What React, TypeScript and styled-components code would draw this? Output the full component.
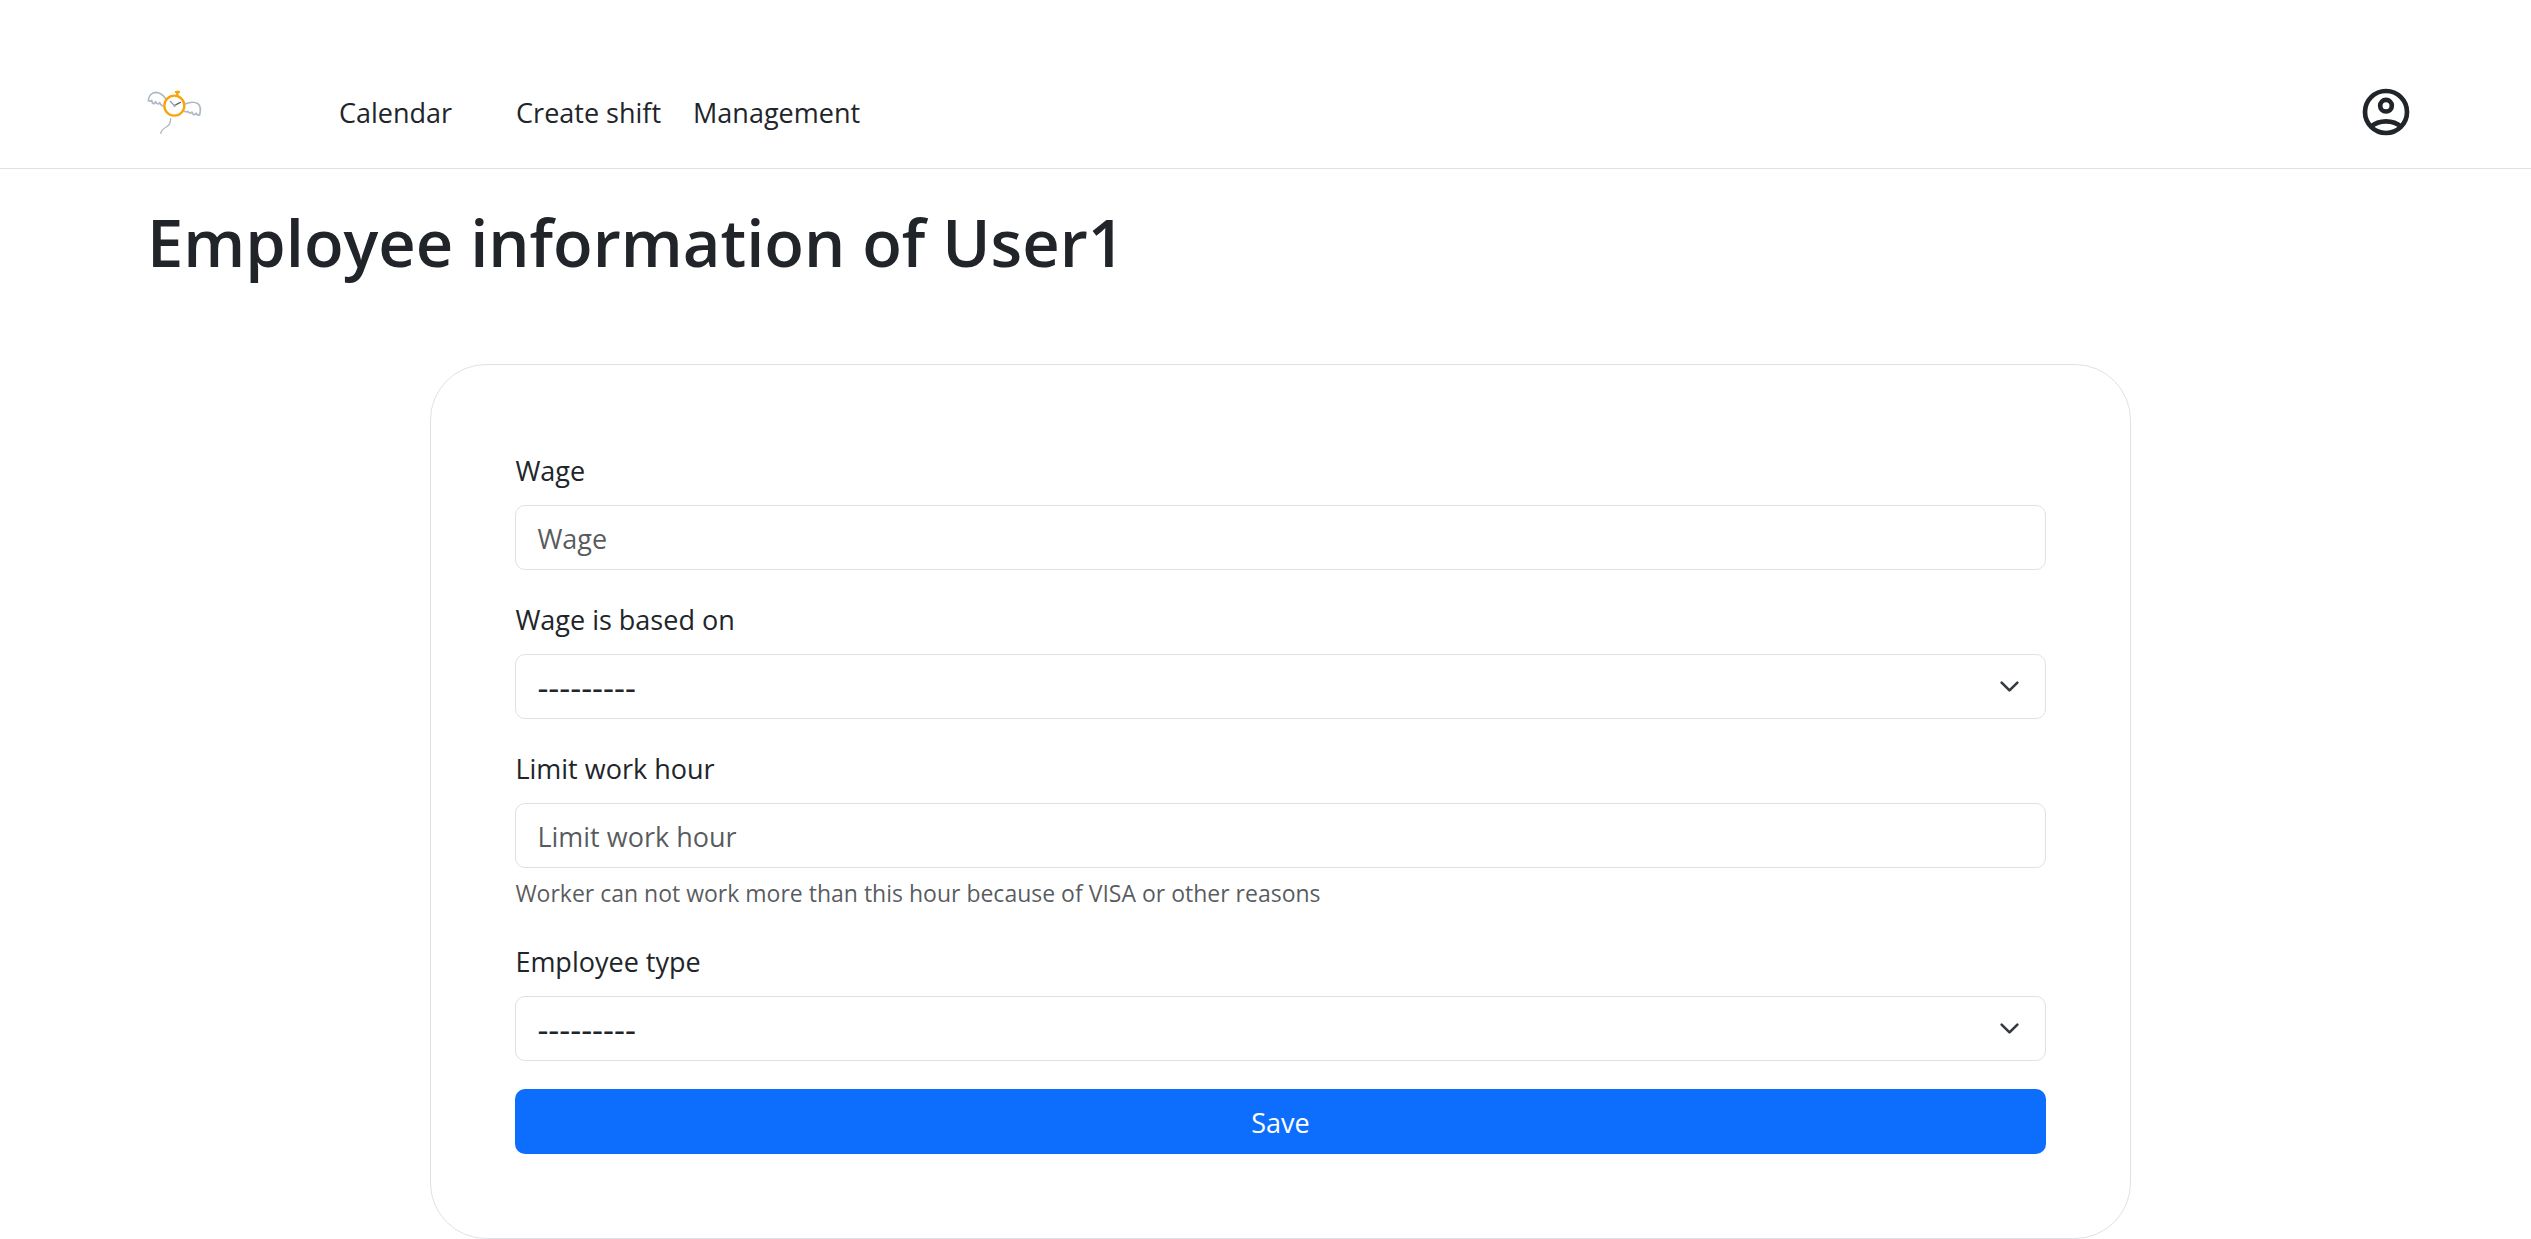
import React from "react";
import styled, { createGlobalStyle } from "styled-components";

const ink = "#212529";
const line = "#dee2e6";

const GlobalStyle = createGlobalStyle`
  *, *::before, *::after { box-sizing: border-box; }
  body {
    margin: 0;
    background: #fff;
    color: ${ink};
    font-family: "Open Sans", "Noto Sans", sans-serif;
    font-size: 27px;
    line-height: 44px;
  }
`;

const Header = styled.header`
  display: flex;
  align-items: center;
  padding: 84px 117px 28px 147px;
  border-bottom: 1px solid ${line};
`;

const LogoLink = styled.a`
  display: flex;
  flex: none;
  width: 192px;
`;

const Nav = styled.nav`
  display: flex;
  flex: 1;
  gap: 32px;
  padding-top: 2px;
`;

const NavLink = styled.a<{ $wide?: boolean }>`
  color: inherit;
  text-decoration: none;
  white-space: nowrap;
  padding-right: ${(p) => (p.$wide ? "32px" : "0")};
`;

const AccountLink = styled.a`
  display: flex;
  color: inherit;
`;

const Main = styled.main`
  padding: 31px 117px 0 147px;
`;

const Title = styled.h1`
  margin: 0 0 80px;
  font-size: 65px;
  font-weight: 600;
  line-height: 84px;
`;

const Card = styled.form`
  display: flex;
  flex-direction: column;
  gap: 28px;
  width: 75%;
  margin: 0 auto;
  padding: 84px;
  border: 1px solid ${line};
  border-radius: 56px;
`;

const Field = styled.div`
  display: flex;
  flex-direction: column;
`;

const Label = styled.label`
  margin-bottom: 12px;
  align-self: flex-start;
`;

const Input = styled.input`
  width: 100%;
  height: 65px;
  padding: 2px 21px 0;
  border: 1px solid ${line};
  border-radius: 10px;
  background: #fff;
  color: ${ink};
  font: inherit;
  &::placeholder {
    color: rgba(33, 37, 41, 0.75);
    opacity: 1;
  }
`;

const SelectWrap = styled.div`
  position: relative;
`;

const Select = styled.select`
  display: block;
  width: 100%;
  height: 65px;
  padding: 0 63px 0 21px;
  appearance: none;
  border: 1px solid ${line};
  border-radius: 10px;
  background: #fff;
  color: ${ink};
  font: inherit;
  font-size: 34px;
`;

const Chevron = styled.svg`
  position: absolute;
  top: 22px;
  right: 26px;
  width: 21px;
  height: 21px;
  pointer-events: none;
`;

const Help = styled.div`
  margin-top: 7px;
  color: rgba(33, 37, 41, 0.75);
  font-size: 23px;
  line-height: 37px;
`;

const SaveButton = styled.button`
  height: 65px;
  padding: 2px 21px 0;
  border: 0;
  border-radius: 10px;
  background: #0d6efd;
  color: #fff;
  font: inherit;
  cursor: pointer;
`;

function Logo() {
  return (
    <svg width="56" height="48" viewBox="54 54 168 144" fill="none" strokeLinecap="round" strokeLinejoin="round" aria-hidden="true">
      <g stroke="#adb8c4" strokeWidth="5">
        <path d="M110 86C102 74 90 67 79 67C67 68 59 79 58 92C62 95 65 94 68 91C69 96 71 102 75 101C78 100 79 97 80 95C82 99 84 103 88 102C91 101 91 99 92 98C94 103 97 107 103 108" />
        <path d="M168 102C180 97 197 95 207 101C215 108 215 123 212 135C207 137 204 134 202 130C199 134 196 135 193 133C190 131 190 128 189 126C186 130 183 130 180 128C178 126 177 125 176 124C173 126 170 126 167 124" />
        <path d="M125 146C124 160 122 165 112 171C102 176 97 181 95 190" strokeWidth="4" />
      </g>
      <circle cx="136" cy="107" r="30" fill="#fff" stroke="#f9a30d" strokeWidth="7" />
      <path d="M145 78V70" stroke="#f9a30d" strokeWidth="7" />
      <path d="M141 66H150" stroke="#f9a30d" strokeWidth="7" />
      <path d="M124 94L136 107" stroke="#8b959f" strokeWidth="4" />
      <path d="M137 106L154 97" stroke="#5c646c" strokeWidth="4" />
      <circle cx="137" cy="107" r="4" fill="#a3afbb" />
    </svg>
  );
}

function AccountIcon() {
  return (
    <svg width="56" height="56" viewBox="0 0 24 24" fill="none" stroke="currentColor" strokeWidth="2" aria-hidden="true">
      <circle cx="12" cy="12" r="9" />
      <circle cx="12" cy="9.3" r="2.5" />
      <path d="M5.4 18.4C9 15.2 15 15.2 18.6 18.4" />
    </svg>
  );
}

function SelectField({ id, label }: { id: string; label: string }) {
  return (
    <Field>
      <Label htmlFor={id}>{label}</Label>
      <SelectWrap>
        <Select id={id} defaultValue="">
          <option value="">---------</option>
        </Select>
        <Chevron viewBox="0 0 16 16" fill="none" aria-hidden="true">
          <path d="m2 5 6 6 6-6" stroke="#343a40" strokeWidth="2" strokeLinecap="round" strokeLinejoin="round" />
        </Chevron>
      </SelectWrap>
    </Field>
  );
}

function InputField({ id, label, help }: { id: string; label: string; help?: string }) {
  return (
    <Field>
      <Label htmlFor={id}>{label}</Label>
      <Input id={id} type="text" placeholder={label} aria-describedby={help ? `${id}-help` : undefined} />
      {help && <Help id={`${id}-help`}>{help}</Help>}
    </Field>
  );
}

export default function App() {
  return (
    <>
      <GlobalStyle />
      <Header>
        <LogoLink href="#" aria-label="Home">
          <Logo />
        </LogoLink>
        <Nav>
          <NavLink href="#calendar" $wide>Calendar</NavLink>
          <NavLink href="#create">Create shift</NavLink>
          <NavLink href="#management">Management</NavLink>
        </Nav>
        <AccountLink href="#account" aria-label="Account">
          <AccountIcon />
        </AccountLink>
      </Header>
      <Main>
        <Title>Employee information of User1</Title>
        <Card onSubmit={(e) => e.preventDefault()}>
          <InputField id="wage" label="Wage" />
          <SelectField id="wage-basis" label="Wage is based on" />
          <InputField
            id="limit"
            label="Limit work hour"
            help="Worker can not work more than this hour because of VISA or other reasons"
          />
          <SelectField id="employee-type" label="Employee type" />
          <SaveButton type="submit">Save</SaveButton>
        </Card>
      </Main>
    </>
  );
}
